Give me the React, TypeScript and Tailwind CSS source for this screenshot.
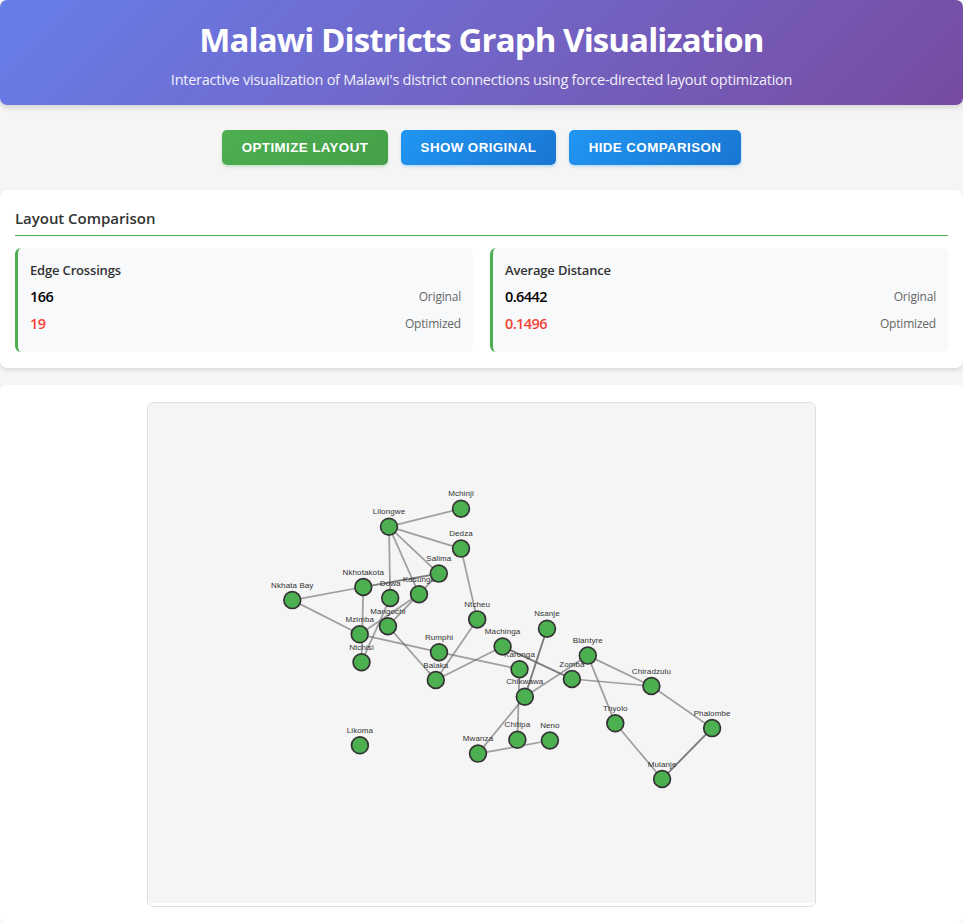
const NODES: Record<string, [number, number]> = {
  'Likoma': [359.9, 745.3],
  'Mchinji': [461, 508.7],
  'Lilongwe': [389, 526.7],
  'Dedza': [461, 548.6],
  'Salima': [438.8, 573.6],
  'Nkhotakota': [363.3, 587],
  'Nkhata Bay': [292.3, 600.1],
  'Dowa': [390.2, 598],
  'Kasungu': [419, 594.2],
  'Mangochi': [387.9, 626.2],
  'Mzimba': [359.7, 634.3],
  'Ntchisi': [361.5, 662.2],
  'Ntcheu': [477.2, 619.4],
  'Nsanje': [547, 628.7],
  'Rumphi': [439, 652.2],
  'Machinga': [502.6, 646.5],
  'Balaka': [435.8, 680],
  'Karonga': [519.5, 669.2],
  'Chikwawa': [524.8, 696.7],
  'Zomba': [571.9, 679],
  'Blantyre': [587.8, 655.6],
  'Chiradzulu': [651.4, 686],
  'Thyolo': [615.3, 723.3],
  'Phalombe': [712.1, 728.1],
  'Mulanje': [662.1, 779],
  'Chitipa': [517.4, 739.8],
  'Neno': [549.9, 740.5],
  'Mwanza': [478, 753.6],
};

// Pairs listed twice are connected in both directions and render darker.
const EDGES: [string, string][] = [
  ['Lilongwe', 'Mchinji'],
  ['Lilongwe', 'Dedza'],
  ['Lilongwe', 'Salima'],
  ['Lilongwe', 'Kasungu'],
  ['Lilongwe', 'Dowa'],
  ['Nkhotakota', 'Nkhata Bay'],
  ['Nkhotakota', 'Salima'],
  ['Salima', 'Nkhotakota'],
  ['Nkhotakota', 'Ntchisi'],
  ['Nkhata Bay', 'Mzimba'],
  ['Mzimba', 'Kasungu'],
  ['Mzimba', 'Rumphi'],
  ['Dowa', 'Ntchisi'],
  ['Salima', 'Mangochi'],
  ['Mangochi', 'Balaka'],
  ['Dedza', 'Ntcheu'],
  ['Ntcheu', 'Balaka'],
  ['Balaka', 'Machinga'],
  ['Rumphi', 'Karonga'],
  ['Machinga', 'Zomba'],
  ['Zomba', 'Machinga'],
  ['Karonga', 'Chitipa'],
  ['Chikwawa', 'Nsanje'],
  ['Nsanje', 'Chikwawa'],
  ['Chikwawa', 'Blantyre'],
  ['Chikwawa', 'Mwanza'],
  ['Mwanza', 'Neno'],
  ['Zomba', 'Chiradzulu'],
  ['Blantyre', 'Chiradzulu'],
  ['Blantyre', 'Thyolo'],
  ['Thyolo', 'Mulanje'],
  ['Mulanje', 'Phalombe'],
  ['Phalombe', 'Mulanje'],
  ['Chiradzulu', 'Phalombe'],
];

function Graph() {
  return (
    <svg viewBox="148 403 667 500" className="block h-[500px] w-[667px] bg-[#f5f5f5]">
      {EDGES.map(([a, b], i) => (
        <line
          key={i}
          x1={NODES[a][0]}
          y1={NODES[a][1]}
          x2={NODES[b][0]}
          y2={NODES[b][1]}
          stroke="#666666"
          strokeOpacity="0.6"
          strokeWidth="1.75"
        />
      ))}
      {Object.entries(NODES).map(([name, [x, y]]) => (
        <text
          key={name}
          x={x}
          y={y - 12.5}
          textAnchor="middle"
          fill="#333333"
          className="font-['Liberation_Sans',Arial,sans-serif] text-[8px] tracking-[0.1px]"
        >
          {name}
        </text>
      ))}
      {Object.entries(NODES).map(([name, [x, y]]) => (
        <circle key={name} cx={x} cy={y} r="8.4" fill="#4caf50" stroke="#333333" strokeWidth="1.7" />
      ))}
    </svg>
  );
}

function Stat({ title, original, optimized }: { title: string; original: string; optimized: string }) {
  return (
    <div className="h-[104px] flex-1 rounded-md border-l-[3px] border-[#4caf50] bg-[#f8f9fa] px-3 pt-3">
      <h4 className="h-[23px] text-[13px] leading-[21px] font-semibold tracking-[-0.17px] text-[#333]">{title}</h4>
      <div className="flex h-[27px] items-center justify-between">
        <span className="text-[14.5px] font-semibold tracking-[-0.6px] text-black">{original}</span>
        <span className="text-[12px] tracking-[-0.2px] text-[#666]">Original</span>
      </div>
      <div className="flex h-[27px] items-center justify-between">
        <span className="text-[14.5px] font-semibold tracking-[-0.6px] text-[#f44336]">{optimized}</span>
        <span className="text-[12px] tracking-[-0.2px] text-[#666]">Optimized</span>
      </div>
    </div>
  );
}

const BUTTON =
  "h-[35px] rounded-[5px] bg-linear-135 font-['Liberation_Sans',Arial,sans-serif] text-[13.33px] font-bold tracking-[0.42px] whitespace-nowrap text-white";

export default function App() {
  return (
    <div className="h-[923px] w-full overflow-hidden bg-[#f5f5f5] font-['Open_Sans','Noto_Sans',sans-serif]">
      <header className="flex h-[105px] flex-col items-center rounded-[7px] bg-linear-135 from-[#667eea] to-[#764ba2] text-white shadow-[0_3px_5px_rgba(0,0,0,0.12)]">
        <h1 className="mt-[18px] text-[33px] leading-[44px] font-bold tracking-[-0.9px] whitespace-nowrap">
          Malawi Districts Graph Visualization
        </h1>
        <p className="mt-2 text-[14.5px] leading-[20px] tracking-[-0.25px] whitespace-nowrap opacity-90">
          Interactive visualization of Malawi's district connections using force-directed layout optimization
        </p>
      </header>

      <div className="mt-[25px] flex justify-center gap-[13px]">
        <button className={`${BUTTON} w-[166px] from-[#4caf50] to-[#45a049] shadow-[0_2px_3px_rgba(76,175,80,0.25)]`}>
          OPTIMIZE LAYOUT
        </button>
        <button className={`${BUTTON} w-[155px] from-[#2196f3] to-[#1976d2] shadow-[0_2px_3px_rgba(33,150,243,0.25)]`}>
          SHOW ORIGINAL
        </button>
        <button className={`${BUTTON} w-[172px] from-[#2196f3] to-[#1976d2] shadow-[0_2px_3px_rgba(33,150,243,0.25)]`}>
          HIDE COMPARISON
        </button>
      </div>

      <section className="mt-[25px] h-[178px] rounded-[7px] bg-white px-[15px] pt-[15px] shadow-[0_2px_4px_rgba(0,0,0,0.12)]">
        <h3 className="h-[31px] border-b border-[#4caf50] text-[15px] leading-[27px] font-semibold tracking-[-0.04px] text-[#333]">
          Layout Comparison
        </h3>
        <div className="mt-3 flex gap-[17px]">
          <Stat title="Edge Crossings" original="166" optimized="19" />
          <Stat title="Average Distance" original="0.6442" optimized="0.1496" />
        </div>
      </section>

      <main className="mt-[17px] flex h-[538px] justify-center rounded-[7px] bg-white pt-[17px]">
        <div className="h-[505px] w-[669px] overflow-hidden rounded-md border border-[#ddd] bg-white">
          <Graph />
        </div>
      </main>
    </div>
  );
}
